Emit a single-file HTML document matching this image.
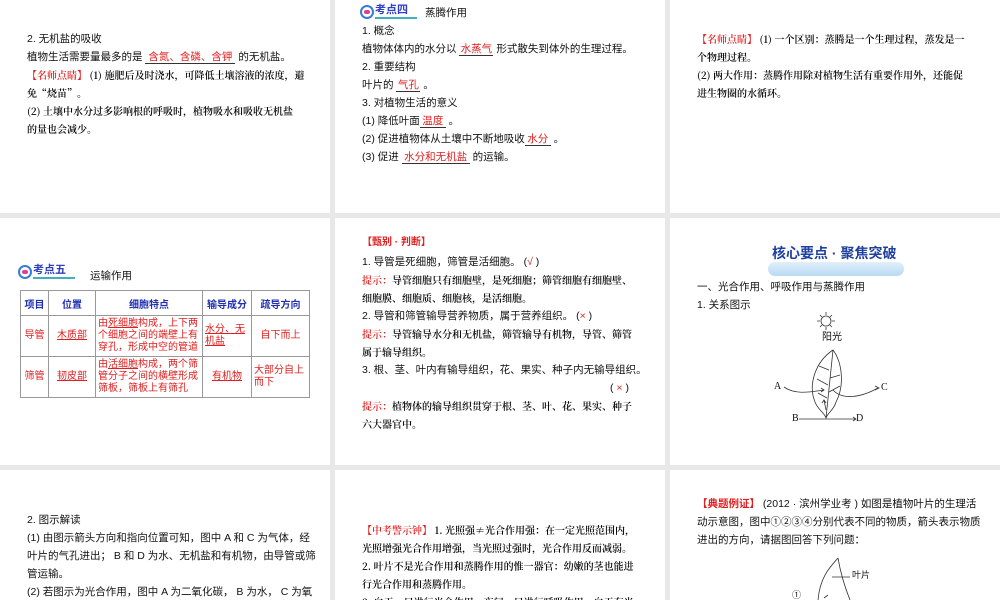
<!DOCTYPE html><html style="width:1000px;height:600px;overflow:hidden"><head><meta charset="utf-8"><style>
body{margin:0;width:1000px;height:600px;background:#e8e8e8;position:relative;overflow:hidden;font-family:"Liberation Sans","Noto Sans CJK SC",sans-serif;color:#111}
.p{position:absolute;background:#fff;overflow:hidden}
.t{position:absolute;font-size:10.5px;line-height:14px;white-space:nowrap}
.r{color:#e02020}
.u{color:#e02020;display:inline-block;border-bottom:1px solid #333;text-align:center;line-height:12px}
.k{font-family:"Noto Serif CJK SC",serif;font-size:10px;font-weight:600;color:#000}
.b{position:absolute;height:16px}
.b i{position:absolute;left:0;top:1px;width:10px;height:10px;border:2px solid #3a7bd5;border-radius:50%;background:#fff}
.b i:after{content:"";position:absolute;left:2px;top:3px;width:6px;height:4px;background:#e04090;border-radius:2px}
.b span{position:absolute;left:15px;top:0;color:#3040c0;font-size:11px;font-weight:bold;border-bottom:2px solid #40b0c0;line-height:13px;width:42px}
table{border-collapse:collapse;position:absolute;left:20px;top:290px;font-size:10px}
td{border:1px solid #999;text-align:center;color:#e02020;line-height:12px;padding:0 2px}
th{border:1px solid #999;color:#2030b0;height:22px;font-weight:bold}
</style></head><body>
<div class="p" style="left:0;top:0;width:330px;height:213px"></div>
<div class="p" style="left:335px;top:0;width:330px;height:213px"></div>
<div class="p" style="left:670px;top:0;width:330px;height:213px"></div>
<div class="p" style="left:0;top:218px;width:330px;height:247px"></div>
<div class="p" style="left:335px;top:218px;width:330px;height:247px"></div>
<div class="p" style="left:670px;top:218px;width:330px;height:247px"></div>
<div class="p" style="left:0;top:470px;width:330px;height:130px"></div>
<div class="p" style="left:335px;top:470px;width:330px;height:130px"></div>
<div class="p" style="left:670px;top:470px;width:330px;height:130px"></div>

<div class="t" style="left:27px;top:32px">2. 无机盐的吸收</div>
<div class="t" style="left:27px;top:50px">植物生活需要量最多的是 <span class="u" style="width:90px">含氮、含磷、含钾</span> 的无机盐。</div>
<div class="t k" style="left:27px;top:68px"><span class="r">【名师点睛】</span> (1) 施肥后及时浇水，可降低土壤溶液的浓度，避</div>
<div class="t k" style="left:27px;top:86px">免“烧苗”。</div>
<div class="t k" style="left:27px;top:104px">(2) 土壤中水分过多影响根的呼吸时，植物吸水和吸收无机盐</div>
<div class="t k" style="left:27px;top:122px">的量也会减少。</div>

<div class="b" style="left:360px;top:4px"><i></i><span>考点四</span></div>
<div class="t" style="left:425px;top:6px">蒸腾作用</div>
<div class="t" style="left:362px;top:24px">1. 概念</div>
<div class="t" style="left:362px;top:42px">植物体体内的水分以 <span class="u" style="width:34px">水蒸气</span> 形式散失到体外的生理过程。</div>
<div class="t" style="left:362px;top:60px">2. 重要结构</div>
<div class="t" style="left:362px;top:78px">叶片的 <span class="u" style="width:24px">气孔</span> 。</div>
<div class="t" style="left:362px;top:96px">3. 对植物生活的意义</div>
<div class="t" style="left:362px;top:114px">(1) 降低叶面<span class="u" style="width:26px">温度</span> 。</div>
<div class="t" style="left:362px;top:132px">(2) 促进植物体从土壤中不断地吸收<span class="u" style="width:26px">水分</span> 。</div>
<div class="t" style="left:362px;top:150px">(3) 促进 <span class="u" style="width:68px">水分和无机盐</span> 的运输。</div>

<div class="t k" style="left:697px;top:32px"><span class="r">【名师点睛】</span> (1) 一个区别：蒸腾是一个生理过程，蒸发是一</div>
<div class="t k" style="left:697px;top:50px">个物理过程。</div>
<div class="t k" style="left:697px;top:68px">(2) 两大作用：蒸腾作用除对植物生活有重要作用外，还能促</div>
<div class="t k" style="left:697px;top:86px">进生物圈的水循环。</div>

<div class="b" style="left:18px;top:264px"><i></i><span>考点五</span></div>
<div class="t" style="left:90px;top:269px">运输作用</div>
<table>
<tr><th style="width:25px">项目</th><th style="width:44px">位置</th><th style="width:104px">细胞特点</th><th style="width:46px">输导成分</th><th style="width:55px">疏导方向</th></tr>
<tr style="height:41px"><td>导管</td><td><u>木质部</u></td><td style="text-align:left">由<u>死细胞</u>构成，上下两个细胞之间的端壁上有穿孔，形成中空的管道</td><td style="text-align:left"><u>水分、无机盐</u></td><td>自下而上</td></tr>
<tr style="height:41px"><td>筛管</td><td><u>韧皮部</u></td><td style="text-align:left">由<u>活细胞</u>构成，两个筛管分子之间的横壁形成筛板，筛板上有筛孔</td><td><u>有机物</u></td><td style="text-align:left">大部分自上而下</td></tr>
</table>

<div class="t r" style="left:362px;top:236px;font-weight:bold;font-size:10px">【甄别 · 判断】</div>
<div class="t" style="left:362px;top:255px">1. 导管是死细胞，筛管是活细胞。 (<span class="r">√</span> )</div>
<div class="t k" style="left:362px;top:273px"><span class="r">提示：</span>导管细胞只有细胞壁，是死细胞；筛管细胞有细胞壁、</div>
<div class="t k" style="left:362px;top:291px">细胞膜、细胞质、细胞核，是活细胞。</div>
<div class="t" style="left:362px;top:309px">2. 导管和筛管输导营养物质，属于营养组织。 (<span class="r">×</span> )</div>
<div class="t k" style="left:362px;top:327px"><span class="r">提示：</span>导管输导水分和无机盐，筛管输导有机物，导管、筛管</div>
<div class="t k" style="left:362px;top:345px">属于输导组织。</div>
<div class="t" style="left:362px;top:363px">3. 根、茎、叶内有输导组织，花、果实、种子内无输导组织。</div>
<div class="t" style="left:610px;top:381px">( <span class="r">×</span> )</div>
<div class="t k" style="left:362px;top:399px"><span class="r">提示：</span>植物体的输导组织贯穿于根、茎、叶、花、果实、种子</div>
<div class="t k" style="left:362px;top:417px">六大器官中。</div>

<div style="position:absolute;left:768px;top:262px;width:136px;height:14px;background:linear-gradient(#d8ecfa,#a8d0f0);border-radius:8px;opacity:.8"></div>
<div class="t" style="left:772px;top:244px;font-size:14px;font-weight:bold;color:#2040a0;line-height:18px">核心要点 · 聚焦突破</div>
<div class="t" style="left:697px;top:280px">一、光合作用、呼吸作用与蒸腾作用</div>
<div class="t" style="left:697px;top:298px">1. 关系图示</div>
<svg style="position:absolute;left:760px;top:308px" width="140" height="120" viewBox="760 308 140 120" fill="none" stroke="#333" stroke-width="0.8">
<circle cx="826" cy="321" r="5"/>
<path d="M826 312v3M826 327v3M817 321h3M832 321h3M820 315l2 2M830 325l2 2M832 315l-2 2M820 327l2-2"/>
<path d="M833 350 C815 362 808 385 815 402 C818 410 824 412 826 418 C828 412 834 410 836 402 C845 385 842 362 833 350Z"/>
<path d="M833 350 L826 418 M829 370 l-10 -4 M828 385 l-11 -6 M827 398 l-9 -5 M830 378 l10 -3 M829 392 l11 -6"/>
<path d="M784 387 C795 395 810 392 824 390 M821 388 l3 2 -3 2"/>
<path d="M833 390 C842 400 860 398 878 388 M875 386 l4 2 -4 2"/>
<path d="M799 419 H826 M826 419 H856 M853 417 l3 2 -3 2"/>
<path d="M826 410 L824 400 M822 403 l2-3 2 3"/>
</svg>
<div class="t" style="left:822px;top:331px;font-size:10px">阳光</div>
<div class="t" style="left:774px;top:380px;font-size:10px;font-family:'Liberation Serif',serif">A</div>
<div class="t" style="left:881px;top:381px;font-size:10px;font-family:'Liberation Serif',serif">C</div>
<div class="t" style="left:792px;top:412px;font-size:10px;font-family:'Liberation Serif',serif">B</div>
<div class="t" style="left:856px;top:412px;font-size:10px;font-family:'Liberation Serif',serif">D</div>

<div class="t" style="left:27px;top:513px">2. 图示解读</div>
<div class="t" style="left:27px;top:531px">(1) 由图示箭头方向和指向位置可知，图中 A 和 C 为气体，经</div>
<div class="t" style="left:27px;top:549px">叶片的气孔进出； B 和 D 为水、无机盐和有机物，由导管或筛</div>
<div class="t" style="left:27px;top:567px">管运输。</div>
<div class="t" style="left:27px;top:585px">(2) 若图示为光合作用，图中 A 为二氧化碳， B 为水， C 为氧</div>

<div class="t k" style="left:362px;top:523px"><span class="r">【中考警示钟】</span> 1. 光照强≠光合作用强：在一定光照范围内，</div>
<div class="t k" style="left:362px;top:541px">光照增强光合作用增强，当光照过强时，光合作用反而减弱。</div>
<div class="t k" style="left:362px;top:559px">2. 叶片不是光合作用和蒸腾作用的惟一器官：幼嫩的茎也能进</div>
<div class="t k" style="left:362px;top:577px">行光合作用和蒸腾作用。</div>
<div class="t k" style="left:362px;top:595px">3. 白天：只进行光合作用，夜间：只进行呼吸作用，白天有光</div>

<div class="t" style="left:697px;top:497px"><span class="r" style="font-weight:bold">【典题例证】</span> (2012 · 滨州学业考 ) 如图是植物叶片的生理活</div>
<div class="t" style="left:697px;top:515px">动示意图，图中①②③④分别代表不同的物质，箭头表示物质</div>
<div class="t" style="left:697px;top:533px">进出的方向，请据图回答下列问题：</div>
<svg style="position:absolute;left:800px;top:555px" width="80" height="45" fill="none" stroke="#333" stroke-width="0.8">
<path d="M38 3 C30 12 20 22 18 45 M38 3 C40 15 44 30 50 45 M32 22 H50"/>
<path d="M28 40 l-4 3"/>
</svg>
<div class="t" style="left:852px;top:568px;font-size:9px">叶片</div>
<div class="t" style="left:792px;top:588px;font-size:9px">①</div>
</body></html>
